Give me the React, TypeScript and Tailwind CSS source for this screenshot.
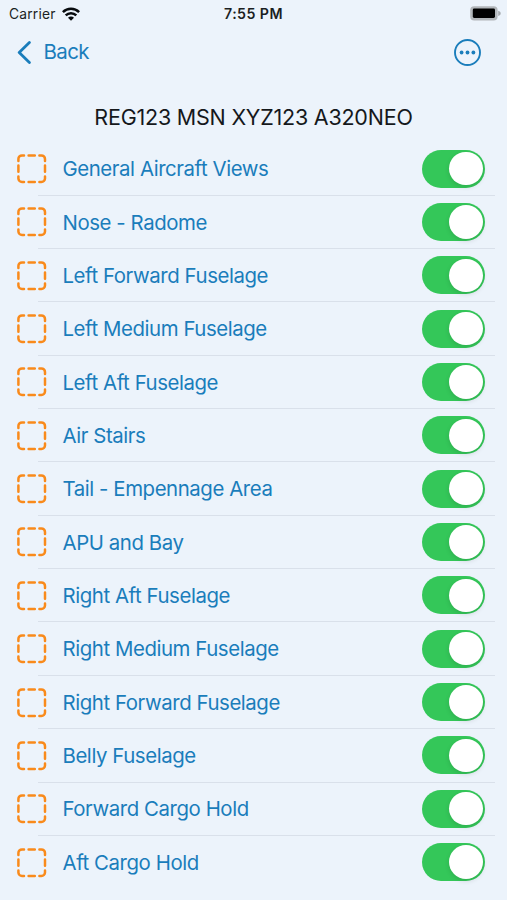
import { useState } from "react";

const AREAS = [
  "General Aircraft Views",
  "Nose - Radome",
  "Left Forward Fuselage",
  "Left Medium Fuselage",
  "Left Aft Fuselage",
  "Air Stairs",
  "Tail - Empennage Area",
  "APU and Bay",
  "Right Aft Fuselage",
  "Right Medium Fuselage",
  "Right Forward Fuselage",
  "Belly Fuselage",
  "Forward Cargo Hold",
  "Aft Cargo Hold",
];

function WifiIcon() {
  return (
    <svg className="mb-[2px] ml-[6px] h-[14px] w-[18px]" viewBox="0 0 18 14" fill="none" stroke="#080b0e" strokeWidth="2.5">
      <path d="M0.9 5.2a11.5 11.5 0 0 1 16.2 0" />
      <path d="M3.7 8.4a7.5 7.5 0 0 1 10.6 0" />
      <path d="M9 13.8 6 10.8a4.2 4.2 0 0 1 6 0Z" fill="#080b0e" stroke="none" />
    </svg>
  );
}

function BatteryIcon() {
  return (
    <svg className="h-[15px] w-[31px]" viewBox="0 0 31 15">
      <rect x="0.2" y="0.3" width="27.4" height="14.2" rx="4" fill="#b2b6ba" />
      <rect x="2.8" y="2.6" width="22.2" height="9.4" rx="1.4" fill="#000" />
      <path d="M28.2 4.8c1.6.6 2.5 1.4 2.5 2.6s-.9 2-2.5 2.6Z" fill="#a6aaae" />
    </svg>
  );
}

function DashedSquare() {
  return (
    <svg className="mb-px h-[30px] w-[30px] shrink-0" viewBox="0 0 30 30" fill="none" stroke="#f98a1b" strokeWidth="2.5" strokeLinecap="round">
      <path d="M1.4 7V5a3.6 3.6 0 0 1 3.6-3.6h2M22.4 1.4h2A3.6 3.6 0 0 1 28 5v2M28 22.4v2a3.6 3.6 0 0 1-3.6 3.6h-2M7 28H5a3.6 3.6 0 0 1-3.6-3.6v-2" />
      <path d="M11.6 1.4h6.2M11.6 28h6.2M1.4 11.6v6.2M28 11.6v6.2" />
    </svg>
  );
}

function Toggle({ label, on, onChange }: { label: string; on: boolean; onChange: () => void }) {
  return (
    <button
      role="switch"
      aria-checked={on}
      aria-label={label}
      onClick={onChange}
      className={`flex h-[38px] w-[63px] shrink-0 items-center rounded-full px-[2.5px] ${on ? "justify-end bg-[#34c759]" : "justify-start bg-[#d5d9df]"}`}
    >
      <span className="size-[33.5px] rounded-full bg-white shadow-[0_2px_5px_rgba(0,0,0,0.12)]" />
    </button>
  );
}

export default function App() {
  const [enabled, setEnabled] = useState(AREAS.map(() => true));

  const toggle = (index: number) => {
    setEnabled((prev) => prev.map((on, i) => (i === index ? !on : on)));
  };

  return (
    <div className="h-[900px] w-[507px] overflow-hidden bg-[#ecf3fb] font-['Inter','Liberation_Sans',sans-serif]">
      {/* Status bar */}
      <div className="grid h-[27px] grid-cols-3 items-center pl-[9px] pr-[6px] text-[#1b1f23]">
        <div className="flex items-center pt-[2px] text-[13.8px] tracking-[0.2px]">
          Carrier
          <WifiIcon />
        </div>
        <div className="pr-[3px] text-center text-[14.2px] font-semibold tracking-[0.45px]">7:55 PM</div>
        <div className="flex justify-end">
          <BatteryIcon />
        </div>
      </div>

      {/* Navigation bar */}
      <nav className="flex h-[51px] items-center justify-between pl-[17px] pr-[26px] text-[#1a7dbb]">
        <button className="flex items-center gap-[11.5px] text-[20.5px] tracking-[-0.6px]">
          <svg className="h-[24px] w-[15px]" viewBox="0 0 15 24" fill="none" stroke="currentColor" strokeWidth="2.8" strokeLinecap="round" strokeLinejoin="round">
            <path d="M12.4 1.6 2.2 11.6l10.2 10" />
          </svg>
          Back
        </button>
        <button aria-label="More">
          <svg className="h-[27px] w-[27px]" viewBox="0 0 27 27">
            <circle cx="13.5" cy="13.5" r="12.5" fill="none" stroke="currentColor" strokeWidth="1.9" />
            <circle cx="7.6" cy="13.5" r="1.9" fill="currentColor" />
            <circle cx="13.5" cy="13.5" r="1.9" fill="currentColor" />
            <circle cx="19.4" cy="13.5" r="1.9" fill="currentColor" />
          </svg>
        </button>
      </nav>

      <h1 className="flex h-[64.4px] items-center justify-center pt-[13px] text-[21.5px] tracking-[-0.22px] text-[#15181b]">
        REG123 MSN XYZ123 A320NEO
      </h1>

      <ul>
        {AREAS.map((area, i) => (
          <li key={area} className="h-[53.35px]">
            <div className="flex h-[52.35px] items-center justify-between pl-[17px] pr-[22px]">
              <div className="flex items-center gap-[15.5px] pt-[2px]">
                <DashedSquare />
                <span className="whitespace-nowrap text-[20.4px] tracking-[-0.43px] text-[#1a7dbb]">{area}</span>
              </div>
              <Toggle label={area} on={enabled[i]} onChange={() => toggle(i)} />
            </div>
            {i < AREAS.length - 1 && <div className="ml-[38px] mr-[12px] h-px bg-[#d9e0ea]" />}
          </li>
        ))}
      </ul>
    </div>
  );
}
